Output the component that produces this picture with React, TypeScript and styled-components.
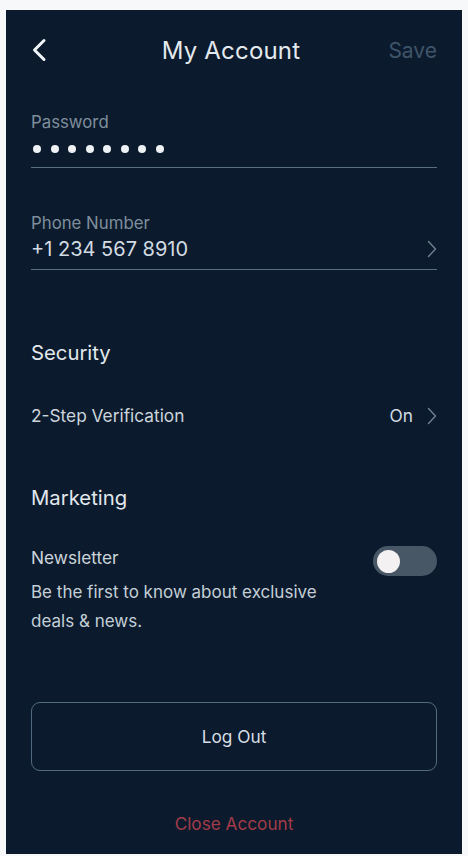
import React from "react";
import styled, { createGlobalStyle } from "styled-components";

const GlobalStyle = createGlobalStyle`
  html, body {
    margin: 0;
    padding: 0;
    background: #f7f8f9;
  }
  body {
    font-family: "Inter", "Liberation Sans", sans-serif;
  }
`;

const Screen = styled.div`
  box-sizing: border-box;
  width: 456px;
  height: 844px;
  margin: 10px 0 0 6px;
  background: #0b1b2d;
  padding: 0 25px;
  display: flex;
  flex-direction: column;
`;

const Header = styled.header`
  height: 80px;
  display: flex;
  align-items: center;
  justify-content: space-between;
`;

const BackButton = styled.button`
  background: none;
  border: none;
  padding: 0;
  width: 53px;
  display: flex;
  align-items: center;
  cursor: pointer;
`;

const Title = styled.h1`
  margin: 0;
  font-size: 24px;
  font-weight: 400;
  color: #e4e9ee;
  letter-spacing: 0.2px;
`;

const SaveButton = styled.button`
  background: none;
  border: none;
  padding: 0;
  width: 59px;
  text-align: right;
  font-family: inherit;
  font-size: 21px;
  color: #3f5468;
`;

const Field = styled.div<{ $top: number }>`
  margin-top: ${({ $top }) => $top}px;
  padding-bottom: 8px;
  border-bottom: 1px solid #5a6e81;
`;

const FieldLabel = styled.div`
  font-size: 16.8px;
  line-height: 20px;
  color: #7f8e9c;
`;

const FieldValueRow = styled.div`
  display: flex;
  align-items: center;
  justify-content: space-between;
  margin-top: 4px;
  font-size: 20px;
  line-height: 24px;
  color: #d3dbe2;
`;

const Dots = styled.div`
  display: flex;
  gap: 9.5px;
  margin-top: 7px;
  height: 20px;
  align-items: center;
  padding-left: 2px;
`;

const Dot = styled.span`
  width: 8px;
  height: 8px;
  border-radius: 50%;
  background: #eef2f5;
`;

const SectionTitle = styled.h2<{ $top: number }>`
  margin: ${({ $top }) => $top}px 0 0;
  font-size: 20.3px;
  line-height: 24px;
  font-weight: 400;
  color: #e2e8ed;
`;

const Row = styled.div<{ $top: number }>`
  margin-top: ${({ $top }) => $top}px;
  height: 22px;
  display: flex;
  align-items: center;
  justify-content: space-between;
  font-size: 17.3px;
  line-height: 22px;
  color: #cdd5dc;
`;

const RowValue = styled.span`
  display: flex;
  align-items: center;
  gap: 14px;
  color: #d3dbe2;
`;

const Description = styled.p`
  margin: 9px 0 0;
  width: 310px;
  font-size: 17px;
  line-height: 29px;
  color: #c5cfd7;
`;

const Toggle = styled.div<{ $on: boolean }>`
  flex-shrink: 0;
  width: 64px;
  height: 30px;
  margin-top: 6px;
  border-radius: 15px;
  background: ${({ $on }) => ($on ? "#2f7fd0" : "#485766")};
  display: flex;
  align-items: center;
  padding: 0 4px;
  box-sizing: border-box;
  justify-content: ${({ $on }) => ($on ? "flex-end" : "flex-start")};
`;

const Knob = styled.span`
  width: 23px;
  height: 23px;
  border-radius: 50%;
  background: #f3f1f1;
`;

const OutlineButton = styled.button`
  margin-top: 66px;
  height: 69px;
  width: 100%;
  background: transparent;
  border: 1.5px solid #526a80;
  border-radius: 9px;
  font-family: inherit;
  font-size: 17.3px;
  color: #d8dfe5;
`;

const DangerLink = styled.button`
  margin-top: 42px;
  background: none;
  border: none;
  padding: 0;
  font-family: inherit;
  font-size: 17.2px;
  line-height: 22px;
  color: #a33b48;
  align-self: center;
`;

const ChevronRight = () => (
  <svg width="10" height="18" viewBox="0 0 10 18" fill="none">
    <path d="M1.5 1.5 L8.5 9 L1.5 16.5" stroke="#6f8090" strokeWidth="1.4" strokeLinecap="round" strokeLinejoin="round" />
  </svg>
);

const ChevronLeft = () => (
  <svg width="16" height="24" viewBox="0 0 16 24" fill="none">
    <path d="M13 2.5 L3.5 12 L13 21.5" stroke="#f2f5f7" strokeWidth="3" strokeLinecap="round" strokeLinejoin="round" />
  </svg>
);

export default function App() {
  const [newsletter] = React.useState(false);

  return (
    <>
      <GlobalStyle />
      <Screen>
        <Header>
          <BackButton aria-label="Back">
            <ChevronLeft />
          </BackButton>
          <Title>My Account</Title>
          <SaveButton>Save</SaveButton>
        </Header>

        <Field $top={22}>
          <FieldLabel>Password</FieldLabel>
          <Dots>
            {Array.from({ length: 8 }).map((_, i) => (
              <Dot key={i} />
            ))}
          </Dots>
        </Field>

        <Field $top={45}>
          <FieldLabel>Phone Number</FieldLabel>
          <FieldValueRow>
            <span>+1 234 567 8910</span>
            <ChevronRight />
          </FieldValueRow>
        </Field>

        <SectionTitle $top={71}>Security</SectionTitle>
        <Row $top={40}>
          <span>2-Step Verification</span>
          <RowValue>
            On
            <ChevronRight />
          </RowValue>
        </Row>

        <SectionTitle $top={59}>Marketing</SectionTitle>
        <Row $top={37}>
          <span>Newsletter</span>
          <Toggle $on={newsletter}>
            <Knob />
          </Toggle>
        </Row>
        <Description>Be the first to know about exclusive deals &amp; news.</Description>

        <OutlineButton>Log Out</OutlineButton>
        <DangerLink>Close Account</DangerLink>
      </Screen>
    </>
  );
}
